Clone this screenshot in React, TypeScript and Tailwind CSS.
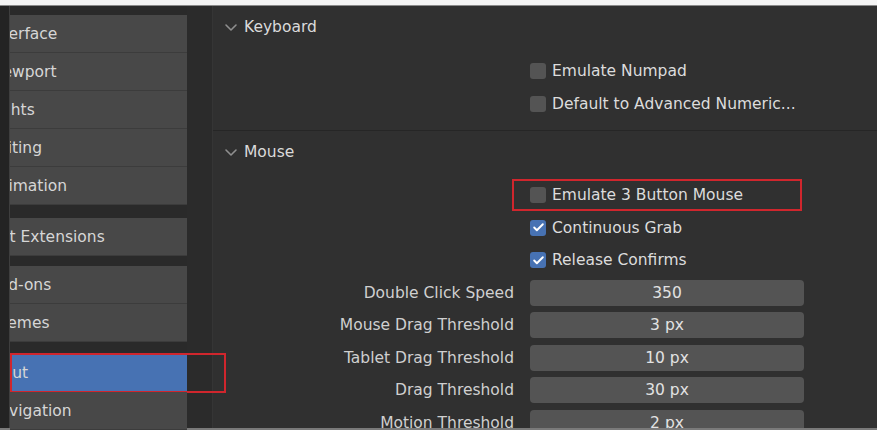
import { Check } from 'lucide-react';

const font = { fontFamily: '"DejaVu Sans", "Liberation Sans", sans-serif' };

const groups: { items: string[]; gap: string }[] = [
  { items: ['Interface', 'Viewport', 'Lights', 'Editing', 'Animation'], gap: 'mt-[9px]' },
  { items: ['Get Extensions'], gap: 'mt-[13px]' },
  { items: ['Add-ons', 'Themes'], gap: 'mt-[10px]' },
  { items: ['Input', 'Navigation', 'Keymap'], gap: 'mt-[12px]' },
];

const fields = [
  { label: 'Double Click Speed', value: '350' },
  { label: 'Mouse Drag Threshold', value: '3 px' },
  { label: 'Tablet Drag Threshold', value: '10 px' },
  { label: 'Drag Threshold', value: '30 px' },
  { label: 'Motion Threshold', value: '2 px' },
];

function Chevron() {
  return (
    <svg width="14" height="10" viewBox="0 0 14 10" className="shrink-0">
      <polyline points="2,3 7,8 12,3" fill="none" stroke="#8f8f8f" strokeWidth="1.6" strokeLinecap="round" strokeLinejoin="round" />
    </svg>
  );
}

function Box({ checked }: { checked?: boolean }) {
  return (
    <div
      className={`w-[16px] h-[16px] rounded-[3px] flex items-center justify-center shrink-0 ${checked ? 'bg-[#4772b3]' : 'bg-[#545454]'}`}
    >
      {checked && <Check className="w-[13px] h-[13px] text-white" strokeWidth={3.5} />}
    </div>
  );
}

function CheckRow({ text, checked, marked }: { text: string; checked?: boolean; marked?: boolean }) {
  return (
    <div className="h-[32.5px] flex items-center">
      <div className="w-[301px] shrink-0" />
      <div className="relative ml-[16px] h-full flex items-center gap-[6px]">
        <Box checked={checked} />
        <span className="text-[#dcdcdc] pt-[1px]">{text}</span>
        {/* annotation frame */}
        {marked && (
          <div className="absolute -left-[18px] top-0 w-[290px] h-[32px] border-2 border-[#d0262d]" />
        )}
      </div>
    </div>
  );
}

function Header({ title }: { title: string }) {
  return (
    <div className="h-[24px] flex items-center pl-[11px] gap-[6px]">
      <Chevron />
      <span className="text-[#dadada] pt-[1px]">{title}</span>
    </div>
  );
}

export default function App() {
  return (
    <div className="w-[877px] h-[430px] bg-[#2a2a2a] flex flex-col overflow-hidden text-[15.5px] leading-none" style={font}>
      <div className="h-[6px] bg-[#f4f4f4] border-b border-[#8a8a8a] shrink-0" />

      <div className="flex flex-1 min-h-0">
        <div className="w-[10px] bg-[#232323] border-r border-[#3e3e3e] shrink-0" />

        {/* sidebar */}
        <div className="w-[177px] shrink-0 bg-[#2a2a2a]">
          {groups.map((g) => (
            <div key={g.items[0]} className={`${g.gap} rounded-r-[4px]`}>
              {g.items.map((name) => {
                const active = name === 'Input';
                return (
                  <div
                    key={name}
                    className={`relative h-[38px] border-b border-[#3c3c3c] ${active ? 'bg-[#4772b3]' : 'bg-[#484848]'}`}
                  >
                    <div className="h-full overflow-hidden flex items-center pt-[3px]">
                      <span className="-ml-[22px] whitespace-nowrap text-[#d6d6d6]">{name}</span>
                    </div>
                    {active && (
                      <div className="absolute left-0 -top-[1px] w-[216px] h-[40px] border-2 border-[#d0262d]" />
                    )}
                  </div>
                );
              })}
            </div>
          ))}
        </div>

        <div className="w-[25px] shrink-0 bg-[#2b2b2b]" />

        {/* main */}
        <div className="flex-1 bg-[#303030] border-l border-[#353535]">
          <div className="pt-[9px] pb-[10px] border-b border-[#262626]">
            <Header title="Keyboard" />
            <div className="mt-[16px]">
              <CheckRow text="Emulate Numpad" />
              <CheckRow text="Default to Advanced Numeric..." />
            </div>
          </div>

          <div className="pt-[9px]">
            <Header title="Mouse" />
            <div className="mt-[15px]">
              <CheckRow text="Emulate 3 Button Mouse" marked />
              <CheckRow text="Continuous Grab" checked />
              <CheckRow text="Release Confirms" checked />
              {fields.map((f) => (
                <div key={f.label} className="h-[32.5px] flex items-center">
                  <div className="w-[301px] shrink-0 text-right text-[#cfcfcf] pt-[1px]">{f.label}</div>
                  <div className="ml-[16px] w-[274px] h-[26px] rounded-[4px] bg-[#545454] flex items-center justify-center text-[#e2e2e2] pt-[1px]">
                    {f.value}
                  </div>
                </div>
              ))}
            </div>
          </div>
        </div>
      </div>

      <div className="h-[2px] bg-[#7a7a7a] shrink-0" />
    </div>
  );
}
